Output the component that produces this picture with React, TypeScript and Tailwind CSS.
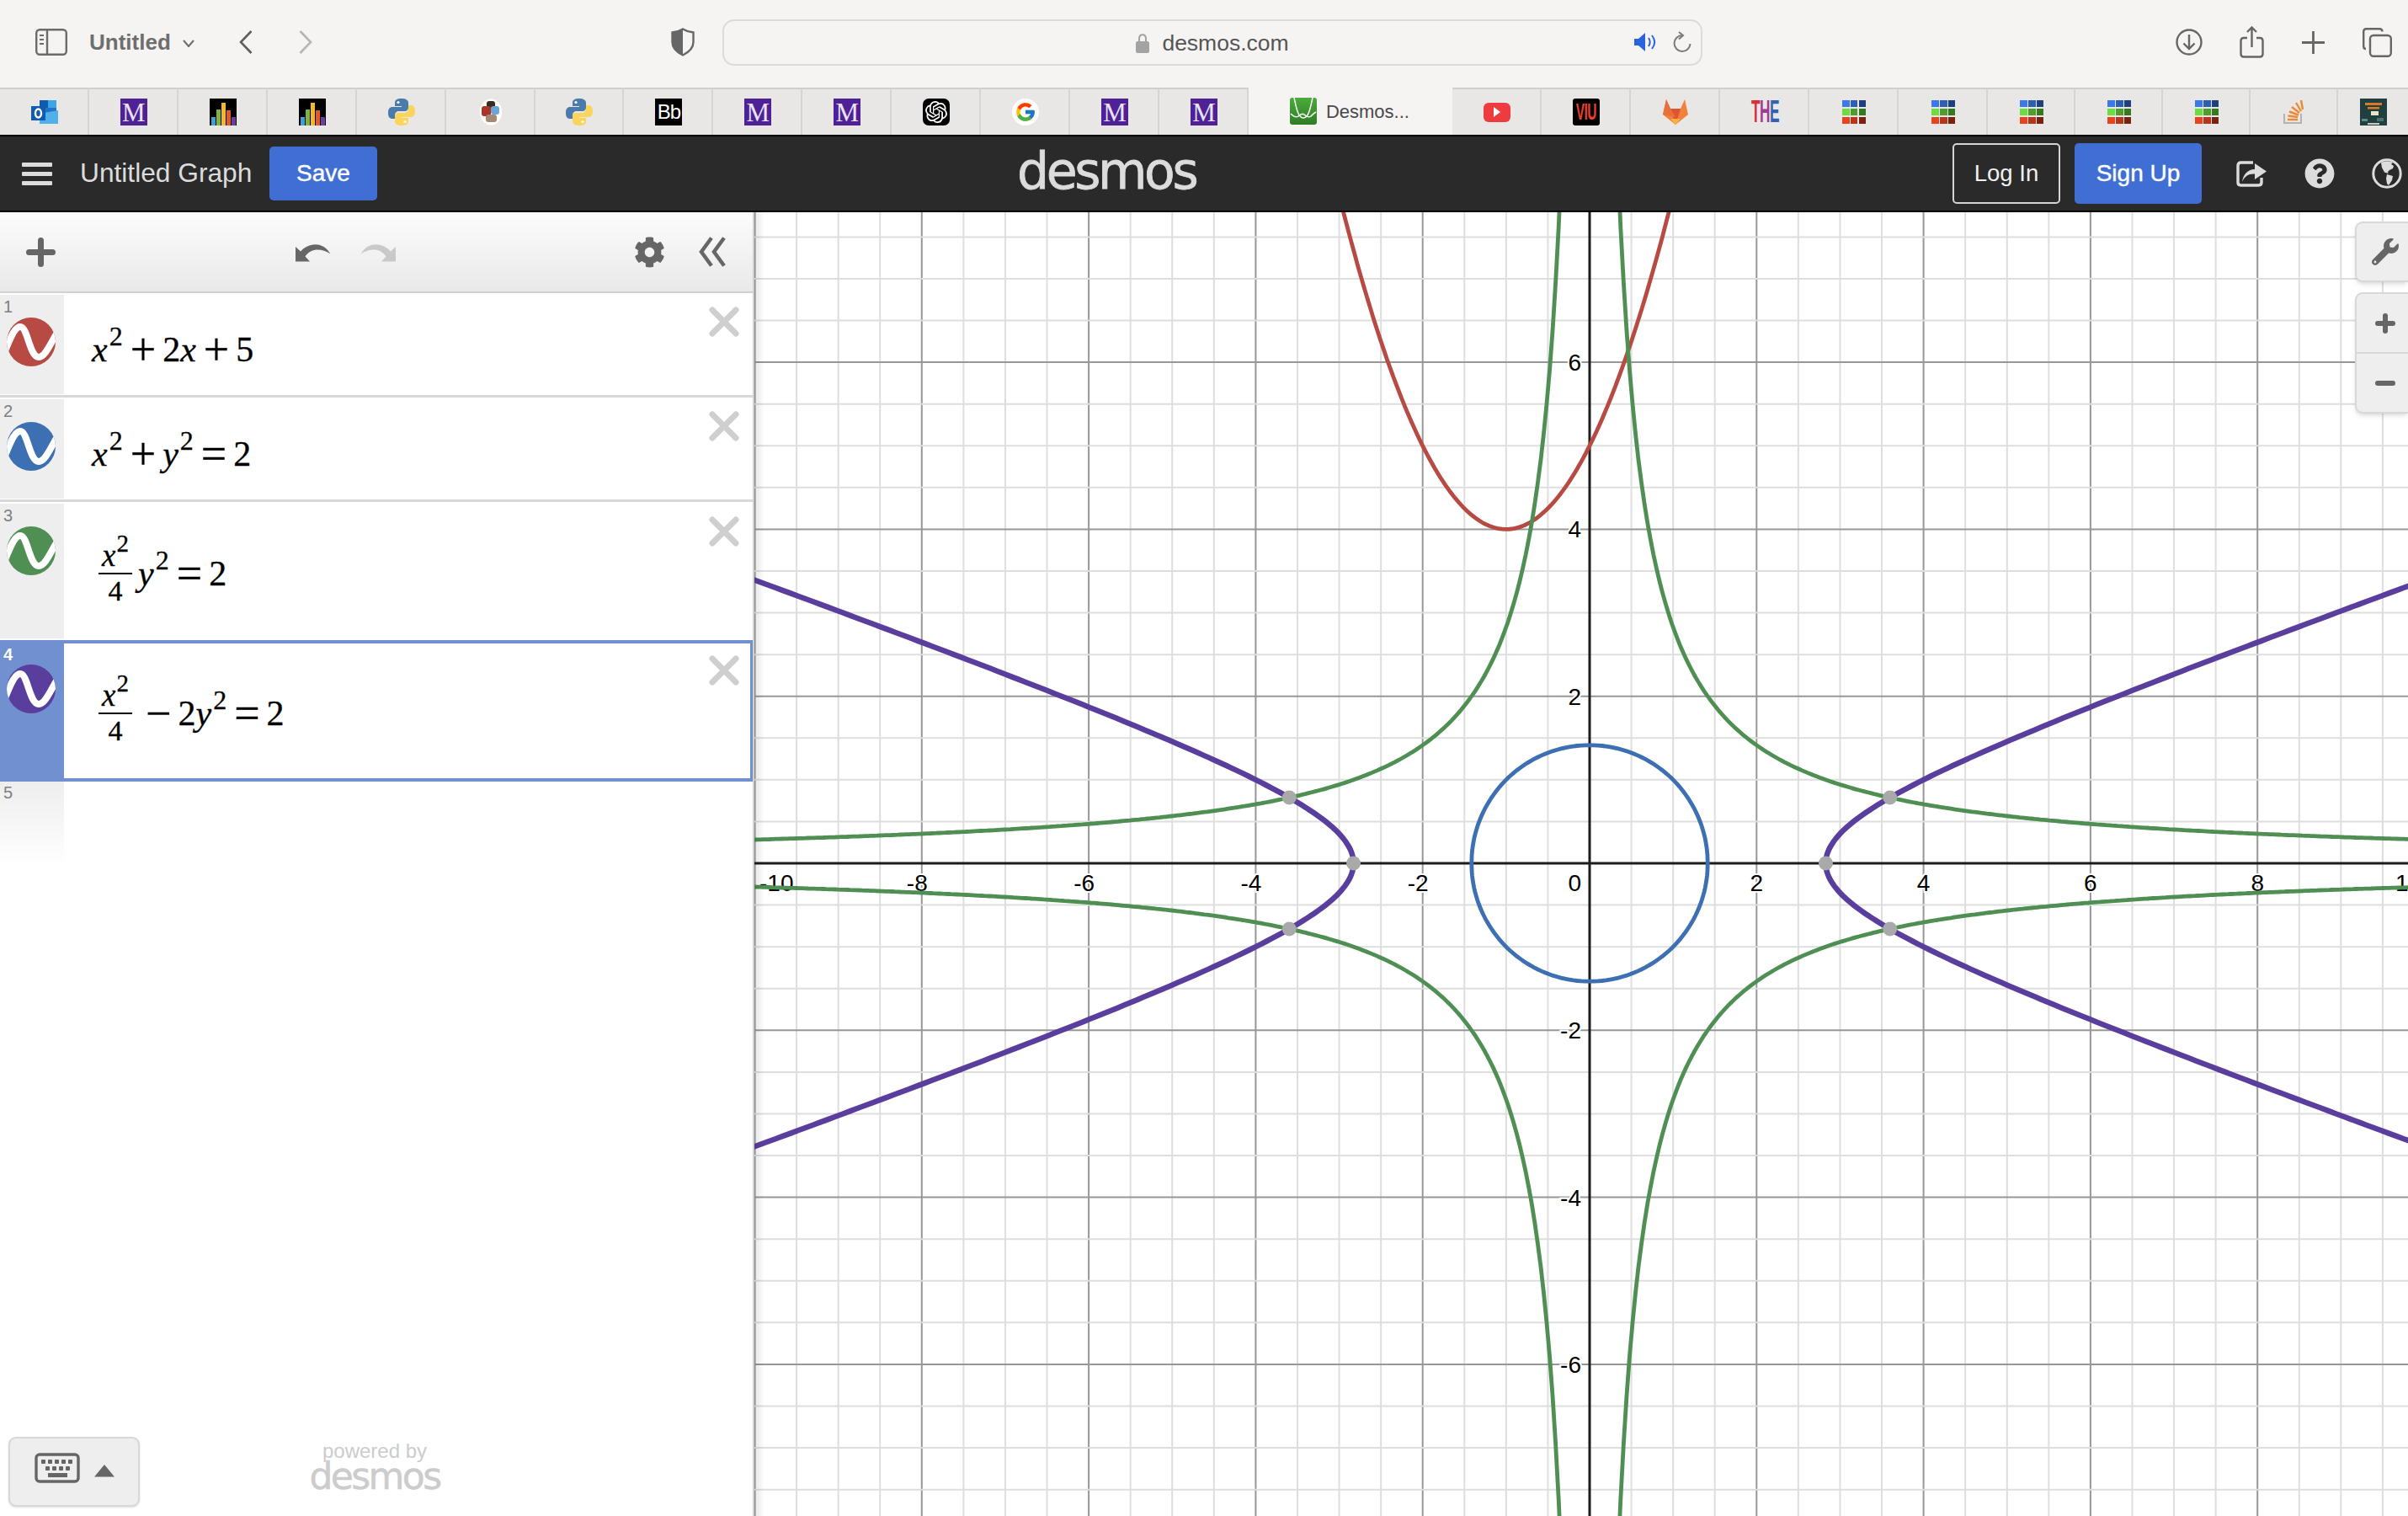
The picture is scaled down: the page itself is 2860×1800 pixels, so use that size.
import React from 'react';
import { FaCog, FaQuestionCircle, FaWrench } from 'react-icons/fa';
import { FcGoogle } from 'react-icons/fc';
import { SiOpenai } from 'react-icons/si';

// graph coordinates -> page pixels
const UNIT = 99.15;
const X = (x: number) => 1888 + x * UNIT;
const Y = (y: number) => 1025 - y * UNIT;

const toPath = (pts: [number, number][]) =>
  pts.map((p, i) => `${i === 0 ? 'M' : 'L'}${X(p[0]).toFixed(1)} ${Y(p[1]).toFixed(1)}`).join(' ');

const range = (from: number, to: number, n: number) =>
  Array.from({ length: n + 1 }, (_, i) => from + ((to - from) * i) / n);

const redPath = toPath(range(-4, 2.5, 240).map((x) => [x, x * x + 2 * x + 5]));
const bluePath = toPath(range(0, Math.PI * 2, 180).map((t) => [Math.SQRT2 * Math.cos(t), Math.SQRT2 * Math.sin(t)])) + ' Z';
const greenPaths = [1, -1].flatMap((sx) =>
  [1, -1].map((sy) => toPath(range(0.3, 11, 300).map((x) => [sx * x, (sy * 2 * Math.SQRT2) / x]))),
);
const purplePaths = [1, -1].map((sx) =>
  toPath(range(-4, 4, 240).map((y) => [sx * Math.sqrt(8 + 8 * y * y), y])),
);

const hx = Math.sqrt(4 * (2 + 2 * 0.618));
const hy = Math.sqrt(0.618);
const points: [number, number][] = [
  [-hx, hy], [-hx, -hy], [hx, hy], [hx, -hy], [-2 * Math.SQRT2, 0], [2 * Math.SQRT2, 0],
];

const minorX = range(-10, 12, 44);
const minorY = range(-8, 8, 32);

const Graph = () => (
  <svg className="absolute inset-0 w-full h-full" viewBox="896 252 1964 1548">
    {minorX.map((x) => (
      <line key={x} x1={X(x)} x2={X(x)} y1={252} y2={1800} stroke={x % 2 === 0 ? '#979797' : '#dedede'} strokeWidth={2} />
    ))}
    {minorY.map((y) => (
      <line key={y} y1={Y(y)} y2={Y(y)} x1={896} x2={2860} stroke={y % 2 === 0 ? '#979797' : '#dedede'} strokeWidth={2} />
    ))}
    <line x1={X(0)} x2={X(0)} y1={252} y2={1800} stroke="#1c1c1c" strokeWidth={3} />
    <line y1={Y(0)} y2={Y(0)} x1={896} x2={2860} stroke="#1c1c1c" strokeWidth={3} />

    <g fontSize={28} fill="#000" stroke="#fff" strokeWidth={4} style={{ paintOrder: 'stroke' }}>
      <text x={902} y={1058}>-10</text>
      {[-8, -6, -4, -2].map((v) => (
        <text key={v} x={X(v) - 5.5} y={1058} textAnchor="middle">{v}</text>
      ))}
      {[2, 4, 6, 8].map((v) => (
        <text key={v} x={X(v)} y={1058} textAnchor="middle">{v}</text>
      ))}
      <text x={2845} y={1058}>10</text>
      <text x={1878} y={1058} textAnchor="end">0</text>
      {[6, 4, 2, -2, -4, -6].map((v) => (
        <text key={v} x={1878} y={Y(v) + 10} textAnchor="end">{v}</text>
      ))}
    </g>

    <path d={redPath} fill="none" stroke="#b84a44" strokeWidth={4.8} />
    <path d={bluePath} fill="none" stroke="#3d70b2" strokeWidth={4.8} />
    {greenPaths.map((d, i) => (
      <path key={i} d={d} fill="none" stroke="#4f8f53" strokeWidth={4.8} />
    ))}
    {purplePaths.map((d, i) => (
      <path key={i} d={d} fill="none" stroke="#5a3e9e" strokeWidth={6.5} />
    ))}
    {points.map((p, i) => (
      <circle key={i} cx={X(p[0])} cy={Y(p[1])} r={8.5} fill="#a9a9a9" />
    ))}
  </svg>
);

const MIcon = () => (
  <div className="w-8 h-8 bg-[#4e2296] flex items-center justify-center font-['Liberation_Serif',serif] text-[31px] leading-none text-[#e9e2f2]">M</div>
);

const BarsIcon = () => (
  <svg width="32" height="32" viewBox="0 0 32 32">
    <rect width="32" height="32" fill="#000" />
    <rect x="2" y="22" width="5" height="10" fill="#3f9fd8" />
    <rect x="8" y="13" width="5" height="19" fill="#7cb342" />
    <rect x="14" y="5" width="5" height="27" fill="#f2b632" />
    <rect x="20" y="14" width="5" height="18" fill="#e2572c" />
    <rect x="26" y="22" width="5" height="10" fill="#6a3fa0" />
  </svg>
);

const PythonIcon = () => {
  const d = 'M16 0C10 0 8 2 8 5V9H16V10H5C2 10 0 12 0 17C0 22 2 24 5 24H8V20C8 17 10 15 13 15H20C22 15 24 13 24 11V5C24 2 21 0 16 0Z';
  return (
    <svg width="32" height="32" viewBox="0 0 32 32">
      <path d={d} fill="#4b7bab" />
      <circle cx="12" cy="4.5" r="1.6" fill="#fff" />
      <g transform="rotate(180 16 16)">
        <path d={d} fill="#f9d55c" />
        <circle cx="12" cy="4.5" r="1.6" fill="#fff" />
      </g>
    </svg>
  );
};

const PyArtIcon = () => (
  <svg width="32" height="32" viewBox="0 0 32 32">
    <ellipse cx="16" cy="16" rx="13" ry="15.5" fill="#fff" />
    <rect x="11" y="3" width="10" height="9" rx="3" fill="#3a2a20" />
    <rect x="5" y="9" width="11" height="12" rx="3" fill="#a9352b" />
    <rect x="16" y="9" width="10" height="10" rx="3" fill="#6ca6d8" />
    <rect x="10" y="19" width="13" height="9" rx="3" fill="#a58a72" />
  </svg>
);

const OutlookIcon = () => (
  <svg width="32" height="32" viewBox="0 0 32 32">
    <rect x="10" y="2" width="20" height="24" fill="#1e74c8" />
    <rect x="20" y="2" width="10" height="9" fill="#3aa6e8" />
    <rect x="10" y="2" width="10" height="9" fill="#0f5bb0" />
    <path d="M10 18L32 14V30H10Z" fill="#4fb0ea" />
    <rect x="0" y="9" width="17" height="17" fill="#0f5bb0" />
    <ellipse cx="8.5" cy="17.5" rx="3.5" ry="5" fill="none" stroke="#fff" strokeWidth="2.4" />
  </svg>
);

const DesmosIcon = () => (
  <svg width="32" height="32" viewBox="0 0 32 32">
    <defs>
      <linearGradient id="desmosFav" x1="0" y1="0" x2="0" y2="1">
        <stop offset="0" stopColor="#4cab3c" />
        <stop offset="1" stopColor="#2e7d24" />
      </linearGradient>
    </defs>
    <rect width="32" height="32" rx="3" fill="url(#desmosFav)" />
    <path d="M5 0C7 8 9 24 16 24C23 24 25 8 27 0" fill="none" stroke="#fff" strokeWidth="1.5" />
    <path d="M1 19C4 22 7 24 10 22C13 20 14 18 17 20C20 23 22 24 25 22C27 20 29 18 31 17" fill="none" stroke="#fff" strokeWidth="1.5" />
  </svg>
);

const GitlabIcon = () => (
  <svg width="32" height="32" viewBox="0 0 32 32">
    <path d="M16 31L1 19L5 1L10 12H22L27 1L31 19Z" fill="#f0803a" />
    <path d="M10 12H22L16 31Z" fill="#de5433" />
    <path d="M16 31L10 24H22Z" fill="#fbb040" />
    <path d="M1 19L5 1L10 12L16 22Z" fill="#e8703a" />
  </svg>
);

const GridIcon = () => {
  const cells = ['#3d78ea', '#2f5fb0', '#1f4080', '#6fdc3d', '#4f9e2c', '#357a1f', '#e8431f', '#b8341a', '#7c2010'];
  return (
    <div className="w-[28px] h-[28px] grid grid-cols-3 gap-[1.5px]">
      {cells.map((c, i) => (
        <div key={i} style={{ backgroundColor: c }} />
      ))}
    </div>
  );
};

const StackIcon = () => (
  <svg width="32" height="32" viewBox="0 0 32 32">
    <path d="M4 18V29H24V18" fill="none" stroke="#b5b3ae" strokeWidth="2" />
    <g stroke="#ec8a33" strokeWidth="2.4">
      <line x1="8" y1="25" x2="20" y2="25" />
      <line x1="8.5" y1="20.5" x2="20" y2="22" />
      <line x1="10" y1="15.5" x2="21" y2="19.5" />
      <line x1="13" y1="10" x2="22" y2="17" />
      <line x1="18" y1="5" x2="24" y2="15" />
      <line x1="24" y1="2" x2="26" y2="13" />
    </g>
  </svg>
);

const BookIcon = () => (
  <svg width="32" height="32" viewBox="0 0 32 32">
    <rect width="32" height="32" fill="#20403f" />
    <rect x="6" y="5" width="20" height="3" fill="#d97a2b" />
    <rect x="9" y="10" width="14" height="2.5" fill="#d97a2b" />
    <rect x="13" y="15" width="9" height="5" fill="#e8e2c8" />
    <rect x="2" y="24" width="7" height="3" fill="#5d8a88" />
    <rect x="20" y="23" width="8" height="4" fill="#4b7270" />
    <rect x="9" y="29" width="14" height="2" fill="#c9c9c0" />
  </svg>
);

const Favicon = ({ name }: { name: string }) => {
  switch (name) {
    case 'outlook':
      return <OutlookIcon />;
    case 'm':
      return <MIcon />;
    case 'bars':
      return <BarsIcon />;
    case 'python':
      return <PythonIcon />;
    case 'art':
      return <PyArtIcon />;
    case 'bb':
      return <div className="w-8 h-8 bg-black text-white text-[24px] tracking-[-1px] leading-none flex items-center justify-center">Bb</div>;
    case 'openai':
      return (
        <div className="w-8 h-8 rounded-[7px] bg-black flex items-center justify-center">
          <SiOpenai className="w-[26px] h-[26px] text-white" />
        </div>
      );
    case 'google':
      return (
        <div className="w-8 h-8 rounded-full bg-white flex items-center justify-center">
          <FcGoogle className="w-[26px] h-[26px]" />
        </div>
      );
    case 'youtube':
      return (
        <div className="w-8 h-[23px] rounded-[6px] bg-[#ee3b40] flex items-center justify-center">
          <svg width="10" height="12" viewBox="0 0 10 12"><path d="M1 0L9 6L1 12Z" fill="#fff" /></svg>
        </div>
      );
    case 'viu':
      return (
        <div className="w-8 h-8 rounded-[3px] bg-black flex items-center justify-center">
          <span className="shrink-0 text-[#e8402a] text-[28px] font-bold leading-none scale-x-[0.55] tracking-[-1px]">VIU</span>
        </div>
      );
    case 'gitlab':
      return <GitlabIcon />;
    case 'the':
      return (
        <div className="w-8 h-8 flex items-center justify-center text-[36px] leading-none font-bold">
          <span className="flex shrink-0 scale-x-[0.48] tracking-[-1px]">
            <span className="text-[#d5333b]">T</span>
            <span className="text-[#a33a8f]">H</span>
            <span className="text-[#2f62b0]">E</span>
          </span>
        </div>
      );
    case 'grid':
      return <GridIcon />;
    case 'stack':
      return <StackIcon />;
    default:
      return <BookIcon />;
  }
};

const leftTabs = ['outlook', 'm', 'bars', 'bars', 'python', 'art', 'python', 'bb', 'm', 'm', 'openai', 'google', 'm', 'm'];
const rightTabs = ['youtube', 'viu', 'gitlab', 'the', 'grid', 'grid'];
const farTabs = ['grid', 'grid', 'grid', 'stack'];

const Tab = ({ name, width }: { name: string; width: string }) => (
  <div className={`${width} shrink-0 h-full flex items-center justify-center pl-[2px] border-r-2 border-[#d6d5d2] border-t-2 border-t-[#cfcecb]`}>
    <Favicon name={name} />
  </div>
);

const BrowserBar = () => (
  <div className="h-[104px] shrink-0 bg-[#f5f4f2] flex items-center pb-[4px] text-[#6b6b6b]">
    <svg className="ml-[42px]" width="38" height="32" viewBox="0 0 38 32" fill="none" stroke="#6b6b6b" strokeWidth="2.4">
      <rect x="1.2" y="1.2" width="35.6" height="29.6" rx="4" />
      <line x1="14" y1="1.2" x2="14" y2="30.8" />
      <g strokeWidth="2"><line x1="5" y1="8" x2="10" y2="8" /><line x1="5" y1="13" x2="10" y2="13" /><line x1="5" y1="18" x2="10" y2="18" /></g>
    </svg>
    <span className="ml-[26px] w-[99px] text-[26px] leading-none font-bold text-[#6e6e6e]">Untitled</span>
    <svg className="ml-[12px] mt-[2px]" width="14" height="9" viewBox="0 0 14 9" fill="none" stroke="#6b6b6b" strokeWidth="2"><path d="M1 1L7 8L13 1" /></svg>
    <svg className="ml-[53px]" width="16" height="28" viewBox="0 0 16 28" fill="none" stroke="#5f5f5f" strokeWidth="2.6"><path d="M14.5 1L2 14L14.5 27" /></svg>
    <svg className="ml-[55px]" width="16" height="28" viewBox="0 0 16 28" fill="none" stroke="#b5b5b5" strokeWidth="2.6"><path d="M1.5 1L14 14L1.5 27" /></svg>
    <svg className="ml-[426px]" width="28" height="34" viewBox="0 0 28 34">
      <path d="M14 1.5C18 4 22 5 26.5 5.5V17C26.5 24 21 29 14 32.5C7 29 1.5 24 1.5 17V5.5C6 5 10 4 14 1.5Z" fill="none" stroke="#666" strokeWidth="2.4" />
      <path d="M14 1.5V32.5C7 29 1.5 24 1.5 17V5.5C6 5 10 4 14 1.5Z" fill="#666" />
    </svg>

    <div className="ml-[33px] w-[1164px] h-[55px] rounded-[14px] border-2 border-[#dcdbd8] grid grid-cols-[1fr_auto_1fr] items-center">
      <div />
      <div className="flex items-center gap-[15px] pt-[2px]">
        <svg width="16" height="23" viewBox="0 0 16 23">
          <path d="M4 10V6C4 3 5.5 1.2 8 1.2S12 3 12 6V10" fill="none" stroke="#a3a3a3" strokeWidth="2" />
          <rect y="9" width="16" height="14" rx="2.5" fill="#a3a3a3" />
        </svg>
        <span className="text-[26.5px] leading-none text-[#555]">desmos.com</span>
      </div>
      <div className="flex items-center justify-end gap-[20px] pr-[11px]">
        <svg width="26" height="22" viewBox="0 0 26 22">
          <path d="M0 7H5L13 0V22L5 15H0Z" fill="#2a62e0" />
          <path d="M17 6C19 9 19 13 17 16M21 3C25 8 25 14 21 19" fill="none" stroke="#2a62e0" strokeWidth="2" />
        </svg>
        <svg width="22" height="26" viewBox="0 0 22 26" fill="none" stroke="#7a7a7a" strokeWidth="2">
          <path d="M11 5A9.5 9.5 0 1 0 20.5 15" />
          <path d="M7 1L12 5L7 9.5" />
        </svg>
      </div>
    </div>

    <svg className="ml-[562px]" width="32" height="34" viewBox="0 0 32 34" fill="none" stroke="#666" strokeWidth="2.4">
      <circle cx="16" cy="17" r="14.5" />
      <path d="M16 8V25M9.5 18.5L16 25L22.5 18.5" />
    </svg>
    <svg className="ml-[44px]" width="29" height="38" viewBox="0 0 29 38" fill="none" stroke="#666" strokeWidth="2.4">
      <path d="M9 14H5C3 14 1.5 15.5 1.5 17.5V33C1.5 35 3 36.5 5 36.5H24C26 36.5 27.5 35 27.5 33V17.5C27.5 15.5 26 14 24 14H20" />
      <path d="M14.5 25V2M9 7L14.5 1.5L20 7" />
    </svg>
    <svg className="ml-[45px]" width="27" height="27" viewBox="0 0 27 27" stroke="#666" strokeWidth="2.8"><path d="M13.5 0V27M0 13.5H27" /></svg>
    <svg className="ml-[45px]" width="35" height="35" viewBox="0 0 35 35" fill="none" stroke="#666" strokeWidth="2.4">
      <path d="M4 25C2.5 25 1.2 24 1.2 22V4.5C1.2 2.5 2.5 1.2 4.5 1.2H20C22 1.2 23.5 2.5 23.5 4.5" />
      <rect x="9" y="9" width="24.8" height="24.8" rx="4" />
    </svg>
  </div>
);

const TabBar = () => (
  <div className="h-[56px] shrink-0 bg-[#e8e7e5] flex overflow-hidden">
    {leftTabs.map((t, i) => (
      <Tab key={i} name={t} width="w-[105.93px]" />
    ))}
    <div className="w-[242px] shrink-0 h-full bg-[#f5f4f2] flex items-center pl-[49px] gap-[11px]">
      <DesmosIcon />
      <span className="text-[22px] leading-none text-[#4a4a4a] pt-[2px]">Desmos...</span>
    </div>
    {rightTabs.map((t, i) => (
      <Tab key={i} name={t} width="w-[106.1px]" />
    ))}
    {farTabs.map((t, i) => (
      <Tab key={i} name={t} width="w-[104px]" />
    ))}
    <div className="flex-1 h-full flex items-center pl-[26px] border-t-2 border-[#cfcecb]">
      <BookIcon />
    </div>
  </div>
);

const ShareIcon = () => (
  <svg className="ml-[41px]" width="36" height="31" viewBox="0 0 36 31">
    <path d="M20 2H5.5Q2 2 2 5.5V25.5Q2 29 5.5 29H26.5Q30 29 30 25.5V20" fill="none" stroke="#dcdcdc" strokeWidth="3.4" />
    <path d="M7 25C8 17 13 10 22 10V3L36 12.5L22 22V15.5C15 15 10 18 7 25Z" fill="#dcdcdc" />
  </svg>
);

const GlobeIcon = () => (
  <svg className="ml-[44px]" width="36" height="36" viewBox="0 0 36 36" fill="#dcdcdc">
    <circle cx="18" cy="18" r="16.2" fill="none" stroke="#dcdcdc" strokeWidth="3" />
    <path d="M11 5C15 3 21 3 25 5L23 7L26 9L25 12L21 14L19 16L19.5 18L15 16.5L12 11Z" />
    <path d="M18 19L25 21L24 26L20 32L18 30L17 24Z" />
  </svg>
);

const AppHeader = () => (
  <div className="h-[92px] shrink-0 bg-[#2a2a2a] border-y-2 border-black flex items-center">
    <div className="ml-[26px] w-[36px] flex flex-col gap-[6px]">
      <div className="h-[5px] rounded-[1px] bg-[#dcdcdc]" />
      <div className="h-[5px] rounded-[1px] bg-[#dcdcdc]" />
      <div className="h-[5px] rounded-[1px] bg-[#dcdcdc]" />
    </div>
    <span className="ml-[33px] w-[205px] text-[31.7px] leading-none text-[#dcdcdc] whitespace-nowrap">Untitled Graph</span>
    <button className="ml-[20px] w-[128px] h-[64px] rounded-[5px] bg-[#406fd4] text-white text-[28px] leading-none [-webkit-text-stroke:0.4px_white]">Save</button>
    <span className="ml-[760px] w-[213px] text-[60px] leading-none font-['DejaVu_Sans',sans-serif] tracking-[-3.4px] text-[#dcdcdc] pb-[6px] [-webkit-text-stroke:0.8px_#dcdcdc]">desmos</span>
    <button className="ml-[898px] w-[128px] h-[72px] rounded-[5px] border-2 border-[#d5d5d5] text-[#f0f0f0] text-[27.5px] leading-none">Log In</button>
    <button className="ml-[17px] w-[151px] h-[72px] rounded-[5px] bg-[#406fd4] text-white text-[28px] leading-none [-webkit-text-stroke:0.4px_white]">Sign Up</button>
    <ShareIcon />
    <FaQuestionCircle className="ml-[45px] w-[36px] h-[36px] text-[#dcdcdc]" />
    <GlobeIcon />
  </div>
);

const FnIcon = ({ color }: { color: string }) => (
  <div className={`w-[58px] h-[58px] rounded-full overflow-hidden ml-[8px] ${color}`}>
    <svg width="58" height="58" viewBox="0 0 58 58">
      <path d="M-2 40C5 22 10 11 16 11C25 11 27 47 38 47C46 47 52 30 60 18" fill="none" stroke="#fff" strokeWidth="8" />
    </svg>
  </div>
);

const CloseIcon = () => (
  <svg width="36" height="36" viewBox="0 0 36 36" stroke="#cfcfcf" strokeWidth="7" strokeLinecap="round">
    <path d="M4 4L32 32M32 4L4 32" />
  </svg>
);

const Op = ({ children }: { children: React.ReactNode }) => (
  <span className="text-[54px] leading-[0] align-[-4px] ml-[9px] mr-[8px]">{children}</span>
);

const Sup = ({ className }: { className: string }) => (
  <span className={`leading-[0] ${className}`}>2</span>
);

const V = ({ children }: { children: React.ReactNode }) => <i>{children}</i>;

const Frac = () => (
  <div className="w-[40px] flex flex-col items-center mr-[7px]">
    <div className="h-[37px] text-[37px] leading-[34px] whitespace-nowrap">
      <V>x</V>
      <Sup className="text-[29px] align-[17px] ml-[1px]" />
    </div>
    <div className="w-full h-[2px] bg-black" />
    <div className="h-[37px] pt-[3px] text-[34px] leading-[34px]">4</div>
  </div>
);

const Row = ({
  n,
  color,
  math,
  rowClass,
  gutterClass,
  closeClass,
  mathClass,
  numClass,
  iconGap,
}: {
  n: number;
  color: string;
  math: React.ReactNode;
  rowClass: string;
  gutterClass: string;
  closeClass: string;
  mathClass: string;
  numClass: string;
  iconGap: string;
}) => (
  <div className={`flex shrink-0 ${rowClass}`}>
    <div className={`w-[76px] shrink-0 ${gutterClass}`}>
      <div className={`pl-[4px] text-[20px] leading-[20px] ${numClass}`}>{n}</div>
      <div className={iconGap}>
        <FnIcon color={color} />
      </div>
    </div>
    <div className={`flex-1 flex items-center font-['Liberation_Serif',serif] text-[42px] leading-[50px] text-black [-webkit-text-stroke:0.3px_black] ${mathClass}`}>
      {math}
    </div>
    <div className={closeClass}>
      <CloseIcon />
    </div>
  </div>
);

const plainRow = 'h-[124px] border-b-[3px] border-[#d8d8d8]';
const plainGutter = 'mt-[2px] h-[118px] bg-[#eeeeee] pt-[4px]';
const supMain = 'text-[32px] align-[19px] ml-[2px]';

const ExpressionList = () => (
  <div className="flex flex-col">
    <Row
      n={1}
      color="bg-[#b84a44]"
      rowClass={plainRow}
      gutterClass={plainGutter}
      closeClass="mt-[16px] mr-[16px]"
      mathClass="pl-[33px] pt-[12px]"
      numClass="text-[#808080]"
      iconGap="mt-[3px]"
      math={
        <span>
          <V>x</V><Sup className={supMain} /><Op>+</Op>2<V>x</V><Op>+</Op>5
        </span>
      }
    />
    <Row
      n={2}
      color="bg-[#3d70b2]"
      rowClass={plainRow}
      gutterClass={plainGutter}
      closeClass="mt-[16px] mr-[16px]"
      mathClass="pl-[33px] pt-[12px]"
      numClass="text-[#808080]"
      iconGap="mt-[3px]"
      math={
        <span>
          <V>x</V><Sup className={supMain} /><Op>+</Op><V>y</V><Sup className={supMain} /><Op>=</Op>2
        </span>
      }
    />
    <Row
      n={3}
      color="bg-[#4f8f53]"
      rowClass="h-[164px]"
      gutterClass="mt-[2px] h-[160px] bg-[#eeeeee] pt-[4px]"
      closeClass="mt-[17px] mr-[16px]"
      mathClass="pl-[41px] pt-[6px]"
      numClass="text-[#808080]"
      iconGap="mt-[3px]"
      math={
        <>
          <Frac />
          <span>
            <V>y</V><Sup className={supMain} /><Op>=</Op>2
          </span>
        </>
      }
    />
    <Row
      n={4}
      color="bg-[#5a3e9e]"
      rowClass="h-[168px] border-y-4 border-r-[3px] border-[#7090d0]"
      gutterClass="bg-[#7090d0] pt-[3px]"
      closeClass="mt-[14px] mr-[13px]"
      mathClass="pl-[41px] pt-[6px]"
      numClass="text-white font-bold"
      iconGap="mt-[2px]"
      math={
        <>
          <Frac />
          <span>
            <Op>−</Op>2<V>y</V><Sup className={supMain} /><Op>=</Op>2
          </span>
        </>
      }
    />
    <div className="h-[102px] w-[76px] bg-linear-to-b from-[#eeeeee] to-white pl-[4px] pt-[3px] text-[20px] leading-[20px] text-[#808080]">5</div>
  </div>
);

const PanelHeader = () => (
  <div className="h-[96px] shrink-0 border-b-2 border-[#d0d0d0] bg-linear-to-b from-[#fcfcfc] to-[#e9e9e9] flex items-center text-[#666]">
    <svg className="ml-[31px]" width="35" height="35" viewBox="0 0 35 35" stroke="#666" strokeWidth="7" strokeLinecap="round">
      <path d="M17.5 3.5V31.5M3.5 17.5H31.5" />
    </svg>
    <svg className="ml-[285px]" width="42" height="23" viewBox="0 0 42 23" fill="#666">
      <path d="M0 22.5V5L6 10.5C13 2 31 -4 41.5 13.5C30 6 18 7 11.5 16.5L17 22.5Z" />
    </svg>
    <svg className="ml-[35px] -scale-x-100" width="42" height="23" viewBox="0 0 42 23" fill="#c9c9c9">
      <path d="M0 22.5V5L6 10.5C13 2 31 -4 41.5 13.5C30 6 18 7 11.5 16.5L17 22.5Z" />
    </svg>
    <FaCog className="ml-[283px] w-[37px] h-[37px]" />
    <svg className="ml-[40px]" width="33" height="36" viewBox="0 0 33 36" fill="none" stroke="#666" strokeWidth="4.5">
      <path d="M15 1.5L3 18L15 34.5M30 1.5L18 18L30 34.5" />
    </svg>
  </div>
);

const PanelFooter = () => (
  <div className="mt-auto flex items-end pl-[10px] pb-[11px]">
    <div className="w-[156px] h-[83px] rounded-[9px] border-2 border-[#d8d8d8] bg-[#eeeeee] shadow-sm flex items-start pt-[17px] pl-[29px]">
      <svg width="54" height="36" viewBox="0 0 54 36" fill="none">
        <rect x="2" y="2" width="50" height="32" rx="4" stroke="#666" strokeWidth="3.4" />
        <g fill="#666">
          {[8, 16, 24, 32, 40].map((x) => (
            <rect key={x} x={x} y="8" width="5" height="5" rx="1" />
          ))}
          {[13, 21, 29, 37].map((x) => (
            <rect key={x} x={x} y="16" width="5" height="5" rx="1" />
          ))}
          <rect x="16" y="24" width="23" height="5" />
        </g>
      </svg>
      <svg className="ml-[17px] mt-[14px]" width="24" height="15" viewBox="0 0 24 15" fill="#666">
        <path d="M12 0L24 14.5H0Z" />
      </svg>
    </div>
    <div className="ml-[201px] w-[156px] flex flex-col items-center text-[#cccccc] pb-[18px]">
      <span className="text-[24px] leading-[24px]">powered by</span>
      <span className="text-[44px] leading-[36px] font-['DejaVu_Sans',sans-serif] tracking-[-2.6px] [-webkit-text-stroke:0.5px_#cccccc]">desmos</span>
    </div>
  </div>
);

const GraphTools = () => (
  <div className="absolute top-[11px] right-0 w-[63px] flex flex-col gap-[12px]">
    <div className="h-[72px] rounded-l-[9px] border-2 border-r-0 border-[#d8d8d8] bg-[#eeeeee] shadow-md flex items-center pl-[18px]">
      <FaWrench className="w-[32px] h-[32px] text-[#666]" />
    </div>
    <div className="h-[144px] rounded-l-[9px] border-2 border-r-0 border-[#d8d8d8] bg-[#eeeeee] shadow-md flex flex-col">
      <div className="flex-1 flex items-center pl-[22px] border-b-2 border-[#d8d8d8]">
        <svg width="24" height="24" viewBox="0 0 24 24" stroke="#666" strokeWidth="6" strokeLinecap="round"><path d="M12 3V21M3 12H21" /></svg>
      </div>
      <div className="flex-1 flex items-center pl-[22px]">
        <svg width="24" height="8" viewBox="0 0 24 8" stroke="#666" strokeWidth="6" strokeLinecap="round"><path d="M3 4H21" /></svg>
      </div>
    </div>
  </div>
);

export default function App() {
  return (
    <div className="w-[2860px] h-[1800px] overflow-hidden flex flex-col bg-white font-['Liberation_Sans',Arial,sans-serif]">
      <BrowserBar />
      <TabBar />
      <AppHeader />
      <div className="flex-1 flex min-h-0">
        <div className="w-[896px] shrink-0 border-r-2 border-[#d0d0d0] flex flex-col bg-white">
          <PanelHeader />
          <ExpressionList />
          <PanelFooter />
        </div>
        <div className="flex-1 relative overflow-hidden">
          <Graph />
          <div className="absolute left-0 top-0 bottom-0 w-[12px] bg-linear-to-r from-black/10 to-transparent" />
          <GraphTools />
        </div>
      </div>
    </div>
  );
}
